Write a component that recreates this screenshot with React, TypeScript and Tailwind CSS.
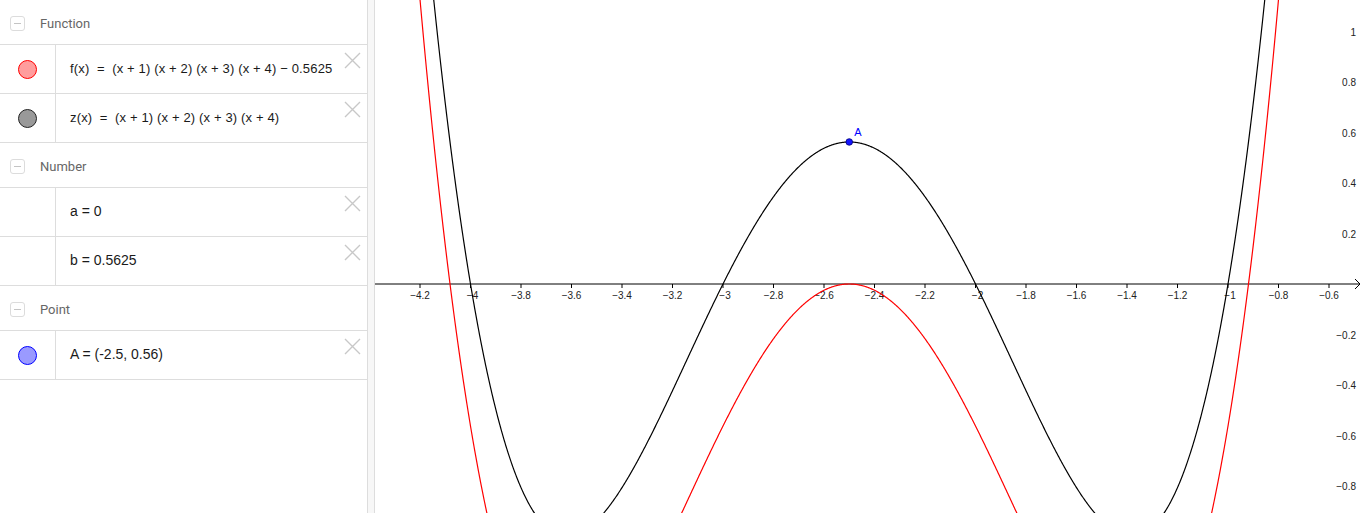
import React from 'react';

const W = 989;
const H = 513;
const OX = 1105.5; // svg x of math x = 0
const OY = 284;
const S = 252.5;

const sx = (x: number) => OX + S * x;
const sy = (y: number) => OY - S * y;
const z = (x: number) => (x + 1) * (x + 2) * (x + 3) * (x + 4);
const f = (x: number) => z(x) - 0.5625;

const curve = (fn: (x: number) => number) => {
  const parts: string[] = [];
  let pen = false;
  for (let px = 0; px <= W; px += 0.5) {
    const x = (px - OX) / S;
    const py = sy(fn(x));
    if (py < -40 || py > H + 40) { pen = false; continue; }
    parts.push(`${pen ? 'L' : 'M'}${px.toFixed(2)} ${py.toFixed(2)}`);
    pen = true;
  }
  return parts.join(' ');
};

const xTicks = [-4.2, -4, -3.8, -3.6, -3.4, -3.2, -3, -2.8, -2.6, -2.4, -2.2, -2, -1.8, -1.6, -1.4, -1.2, -1, -0.8, -0.6];
const yTicks = [1, 0.8, 0.6, 0.4, 0.2, -0.2, -0.4, -0.6, -0.8];
const fmt = (v: number) => (v < 0 ? '\u2212' + String(Math.abs(Math.round(v * 10) / 10)) : String(Math.round(v * 10) / 10));

const CollapseIcon = () => (
  <span className="flex h-[15px] w-[15px] items-center justify-center rounded-[3px] border border-[#dcdcdc]">
    <span className="h-[1.5px] w-[7px] bg-[#c4c4c4]" />
  </span>
);

const CloseIcon = () => (
  <svg width="17" height="17" viewBox="0 0 17 17" className="absolute right-[6px] top-[7px]">
    <path d="M1 1 L16 16 M16 1 L1 16" stroke="#c8c8c8" strokeWidth="1.4" />
  </svg>
);

const Header = ({ label }: { label: string }) => (
  <div className="flex h-[45px] items-center border-b border-[#dddddd] pl-[10px] pt-[3px]">
    <CollapseIcon />
    <span className="ml-[15px] text-[13px] text-[#666666] [font-family:Roboto,'Liberation_Sans',sans-serif]">{label}</span>
  </div>
);

const Row = ({ dot, border, children, size = 'text-[13px] tracking-[0.15px]' }: { dot?: string; border?: string; children: React.ReactNode; size?: string }) => (
  <div className="relative flex h-[49px] border-b border-[#dddddd]">
    <div className="flex w-[56px] items-center justify-center border-r border-[#dddddd]">
      {dot && <span className={`h-[19px] w-[19px] rounded-full border ${dot} ${border}`} />}
    </div>
    <div className={`flex items-center pb-[1px] pl-[14px] text-[#1a1a1a] ${size} [font-family:'Liberation_Sans',Arial,sans-serif]`}>{children}</div>
    <CloseIcon />
  </div>
);

export default function App() {
  return (
    <div className="flex h-[513px] w-[1364px] overflow-hidden bg-white">
      <div className="w-[367px] shrink-0 bg-white">
        <Header label="Function" />
        <Row dot="bg-[#ff9d9d]" border="border-[#ff0000]">
          <span className="whitespace-pre">f(x)  =  (x + 1) (x + 2) (x + 3) (x + 4) − 0.5625</span>
        </Row>
        <Row dot="bg-[#999999]" border="border-[#222222]">
          <span className="whitespace-pre">z(x)  =  (x + 1) (x + 2) (x + 3) (x + 4)</span>
        </Row>
        <Header label="Number" />
        <Row size="text-[14px]"><span className="whitespace-pre">a = 0</span></Row>
        <Row size="text-[14px]"><span className="whitespace-pre">b = 0.5625</span></Row>
        <Header label="Point" />
        <Row dot="bg-[#9a9aff]" border="border-[#0000ff]" size="text-[14px]">
          <span className="whitespace-pre">A = (-2.5, 0.56)</span>
        </Row>
      </div>
      <div className="w-[8px] shrink-0 border-x border-[#dddddd] bg-[#f7f7f7]" />
      <svg width={W} height={H} className="shrink-0" style={{ fontFamily: "'Liberation Sans', Arial, sans-serif" }}>
        <line x1="0" y1={OY} x2={W - 4} y2={OY} stroke="#000" strokeWidth="1" />
        <path d={`M${W - 9} ${OY - 5} L${W - 4} ${OY} L${W - 9} ${OY + 5}`} fill="none" stroke="#000" strokeWidth="1" />
        {xTicks.map((t) => (
          <g key={t}>
            <line x1={sx(t)} y1={OY} x2={sx(t)} y2={OY + 4} stroke="#000" strokeWidth="1" />
            <text x={sx(t) + (Number.isInteger(t) ? 2 : 0)} y={OY + 15} fontSize="10" textAnchor="middle" fill="#222">{fmt(t)}</text>
          </g>
        ))}
        {yTicks.map((t) => (
          <text key={t} x={981} y={sy(t) + 4} fontSize="10" textAnchor="end" fill="#222">{fmt(t)}</text>
        ))}
        <path d={curve(f)} fill="none" stroke="#ff0000" strokeWidth="1.2" />
        <path d={curve(z)} fill="none" stroke="#000" strokeWidth="1.2" />
        <circle cx={sx(-2.5)} cy={sy(0.5625)} r="3.3" fill="#1515ff" stroke="#00007a" strokeWidth="0.8" />
        <text x={sx(-2.5) + 5} y={sy(0.5625) - 6} fontSize="11" fill="#0000ff">A</text>
      </svg>
    </div>
  );
}
